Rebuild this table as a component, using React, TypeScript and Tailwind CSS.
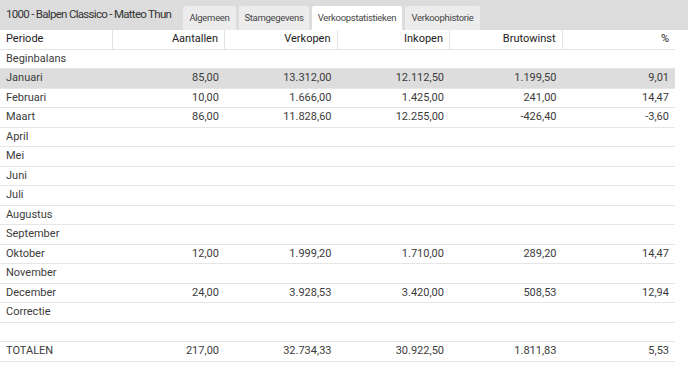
const rows: string[][] = [
  ["Beginbalans", "", "", "", "", ""],
  ["Januari", "85,00", "13.312,00", "12.112,50", "1.199,50", "9,01"],
  ["Februari", "10,00", "1.666,00", "1.425,00", "241,00", "14,47"],
  ["Maart", "86,00", "11.828,60", "12.255,00", "-426,40", "-3,60"],
  ["April", "", "", "", "", ""],
  ["Mei", "", "", "", "", ""],
  ["Juni", "", "", "", "", ""],
  ["Juli", "", "", "", "", ""],
  ["Augustus", "", "", "", "", ""],
  ["September", "", "", "", "", ""],
  ["Oktober", "12,00", "1.999,20", "1.710,00", "289,20", "14,47"],
  ["November", "", "", "", "", ""],
  ["December", "24,00", "3.928,53", "3.420,00", "508,53", "12,94"],
  ["Correctie", "", "", "", "", ""],
  ["", "", "", "", "", ""],
  ["TOTALEN", "217,00", "32.734,33", "30.922,50", "1.811,83", "5,53"],
];

const headers = ["Periode", "Aantallen", "Verkopen", "Inkopen", "Brutowinst", "%"];

const tabs = [
  { label: "Algemeen", width: "w-[53px]", active: false },
  { label: "Stamgegevens", width: "w-[70px]", active: false },
  { label: "Verkoopstatistieken", width: "w-[90px]", active: true },
  { label: "Verkoophistorie", width: "w-[75px]", active: false },
];

function TabBar() {
  return (
    <header className="flex h-[30px] items-stretch bg-[#dcdcdc]">
      <h1 className="flex w-[183px] items-center whitespace-nowrap pl-[6px] pb-[1px] text-[11.5px] font-normal tracking-[-0.7px] text-[#333]">
        1000 - Balpen Classico - Matteo Thun
      </h1>
      <nav className="flex gap-[3px] pt-[6px]">
        {tabs.map((t) => (
          <div
            key={t.label}
            className={`flex ${t.width} items-center justify-center whitespace-nowrap rounded-t-[2px] text-[9.5px] tracking-[-0.3px] text-[#444] ${
              t.active ? "bg-white" : "bg-[#ececec]"
            }`}
          >
            {t.label}
          </div>
        ))}
      </nav>
    </header>
  );
}

function StatsTable() {
  return (
    <div className="w-[675px]">
      <div className="grid h-[19.5px] grid-cols-6 border-b border-[#e3e3e3] text-[11px] text-[#222]">
        {headers.map((h, i) => (
          <div
            key={h}
            className={`flex items-center px-[6px] ${i === 0 ? "justify-start" : "justify-end"} ${
              i < headers.length - 1 ? "border-r border-[#e3e3e3]" : ""
            }`}
          >
            {h}
          </div>
        ))}
      </div>
      {rows.map((r, ri) => (
        <div
          key={ri}
          className={`grid h-[19.5px] grid-cols-6 border-b border-[#e6e6e6] text-[11px] text-[#3c3c3c] ${
            ri === 1 ? "bg-[#dddddd]" : ""
          }`}
        >
          {r.map((c, ci) => (
            <div
              key={ci}
              className={`flex items-center px-[6px] ${ci === 0 ? "justify-start" : "justify-end"}`}
            >
              {c}
            </div>
          ))}
        </div>
      ))}
    </div>
  );
}

export default function App() {
  return (
    <div
      className="h-[375px] w-[688px] overflow-hidden bg-white"
      style={{ fontFamily: "Roboto, 'Liberation Sans', sans-serif" }}
    >
      <TabBar />
      <StatsTable />
    </div>
  );
}
